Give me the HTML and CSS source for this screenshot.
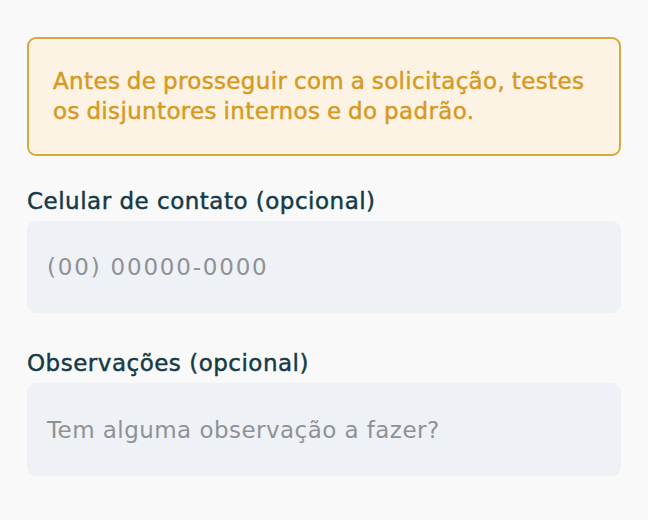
FILE: index.html
```html
<!DOCTYPE html>
<html lang="pt-BR">
<head>
<meta charset="utf-8">
<link rel="stylesheet" href="styles.css">
</head>
<body>
<main class="page">
  <div class="alert">Antes de prosseguir com a solicitação, testes os disjuntores internos e do padrão.</div>
  <div class="field">
    <label class="label">Celular de contato (opcional)</label>
    <div class="input"><span class="placeholder placeholder-phone">(00) 00000-0000</span></div>
  </div>
  <div class="field field-second">
    <label class="label">Observações (opcional)</label>
    <div class="input input-tall"><span class="placeholder">Tem alguma observação a fazer?</span></div>
  </div>
</main>
</body>
</html>
```
FILE: styles.css
```css
html, body {
  margin: 0;
  padding: 0;
  background: #f9f9f9;
}
body {
  font-family: "DejaVu Sans", sans-serif;
}
.page {
  width: 594px;
  padding: 37px 27px 0;
  display: flex;
  flex-direction: column;
}
.alert {
  box-sizing: border-box;
  height: 119px;
  border: 2px solid #d6a83f;
  border-radius: 9px;
  background: #fcf3e4;
  color: #d69a1f;
  font-size: 23px;
  letter-spacing: 0.35px;
  word-spacing: -1px;
  -webkit-text-stroke: 0.45px #d69a1f;
  line-height: 30px;
  padding: 27px 6px 0 24px;
}
.field {
  display: flex;
  flex-direction: column;
  margin-top: 31px;
}
.field-second {
  margin-top: 36px;
}
.label {
  color: #143a47;
  font-size: 23px;
  letter-spacing: 0.5px;
  -webkit-text-stroke: 0.45px #143a47;
  line-height: 28px;
  margin-bottom: 6px;
}
.input {
  height: 92px;
  border-radius: 9px;
  background: #eef1f5;
  display: flex;
  align-items: center;
  padding-left: 20px;
}
.input-tall {
  height: 93px;
}
.placeholder {
  color: #909195;
  font-size: 23px;
  letter-spacing: 0.45px;
}
.placeholder-phone {
  letter-spacing: 1.8px;
}
```
